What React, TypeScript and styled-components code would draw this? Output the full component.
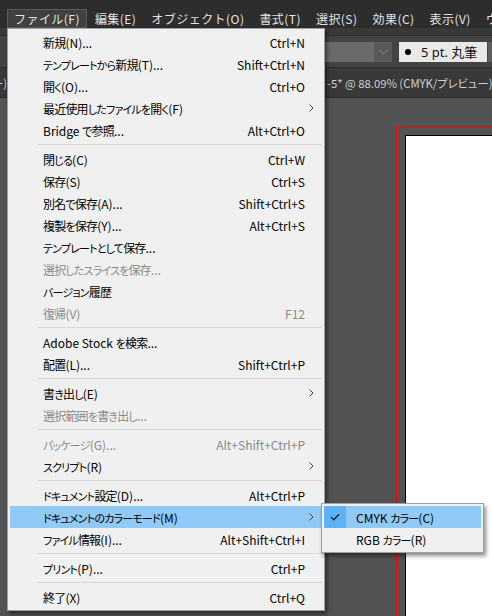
import React from "react";
import styled, { createGlobalStyle } from "styled-components";

const Global = createGlobalStyle`
  html, body { margin: 0; padding: 0; height: 100%; overflow: hidden; background: #535353; }
  #root { height: 100%; }
`;

const Window = styled.div`
  height: 100%;
  display: flex;
  flex-direction: column;
  font-family: "Noto Sans CJK JP", sans-serif;
`;

const MenuBar = styled.div`
  height: 28px;
  box-sizing: border-box;
  padding: 9px 0 0 7px;
  background: #2d2d2d;
  display: flex;
  align-items: stretch;
  position: relative;
  z-index: 5;
`;

const MenuTitle = styled.div<{ $active?: boolean }>`
  position: relative;
  flex: none;
  padding: 0 6px;
  margin-right: 1px;
  display: flex;
  align-items: center;
  font-size: 12px;
  letter-spacing: 0.45px;
  color: #e4e4e4;
  white-space: nowrap;
  border: 1px solid ${(p) => (p.$active ? "#5a5a5a" : "transparent")};
  background: ${(p) => (p.$active ? "#404040" : "transparent")};
`;

const Dropdown = styled.div`
  position: absolute;
  top: calc(100% + 1px);
  left: -1px;
  width: 318px;
  box-sizing: border-box;
  background: #f0f0f0;
  border: 1px solid #a0a0a0;
  box-shadow: 2px 3px 4px rgba(0, 0, 0, 0.5);
  padding: 2px;
  font-feature-settings: "palt";
  letter-spacing: 0;
  color: #000;
`;

const Item = styled.div<{ $disabled?: boolean; $hl?: boolean }>`
  position: relative;
  height: 22px;
  display: flex;
  align-items: center;
  padding: 0 8px 0 33px;
  font-size: 12px;
  white-space: nowrap;
  color: ${(p) => (p.$disabled ? "#8a8a8a" : "#000")};
  background: ${(p) => (p.$hl ? "#91c9f7" : "transparent")};
`;

const Label = styled.span`
  flex: 1;
`;

const Kana = styled.span`
  font-size: 11px;
  letter-spacing: -0.8px;
`;

const Kanji = styled.span`
  letter-spacing: -0.8px;
`;

const Shortcut = styled.span`
  margin-right: 9px;
`;

const Sep = styled.div`
  height: 1px;
  background: #d7d7d7;
  margin: 3px 0 3px 28px;
`;

const SubMenu = styled.div`
  position: absolute;
  top: -3px;
  left: calc(100% - 1px);
  width: 163px;
  box-sizing: border-box;
  background: #f0f0f0;
  border: 1px solid #a0a0a0;
  box-shadow: 2px 3px 4px rgba(0, 0, 0, 0.45);
  padding: 2px;
`;

const SubItem = styled.div<{ $hl?: boolean }>`
  height: 22px;
  display: flex;
  align-items: center;
  font-size: 12px;
  color: #000;
  white-space: nowrap;
  background: ${(p) => (p.$hl ? "#91c9f7" : "transparent")};
`;

const CheckCell = styled.div<{ $on?: boolean }>`
  width: 22px;
  height: 22px;
  flex: none;
  display: flex;
  align-items: center;
  justify-content: center;
  background: ${(p) => (p.$on ? "#5eb2f6" : "transparent")};
`;

const SubLabel = styled.span`
  padding-left: 10px;
`;

const Strip = styled.div`
  height: 7px;
  background: #393939;
`;

const Toolbar = styled.div`
  height: 32px;
  box-sizing: border-box;
  background: #434343;
  border-top: 1px solid #2f2f2f;
  display: flex;
  align-items: center;
  padding-left: 250px;
  overflow: hidden;
`;

const GrayField = styled.div`
  width: 124px;
  height: 20px;
  flex: none;
  background: #6b6b6b;
`;

const ChevronBtn = styled.div<{ $light?: boolean }>`
  width: 18px;
  height: 20px;
  flex: none;
  background: ${(p) => (p.$light ? "#5e5e5e" : "#595959")};
  display: flex;
  align-items: center;
  justify-content: center;
`;

const StrokeField = styled.div`
  width: 88px;
  height: 20px;
  flex: none;
  margin-left: 7px;
  margin-right: 1px;
  background: #e8e8e8;
  display: flex;
  align-items: center;
  padding-left: 6px;
  box-sizing: border-box;
  font-family: "Noto Sans", "Noto Sans CJK JP", sans-serif;
  font-size: 13px;
  color: #111;
  white-space: nowrap;
  gap: 10px;
`;

const Dot = styled.span`
  width: 6px;
  height: 6px;
  border-radius: 50%;
  background: #000;
  flex: none;
`;

const TabBar = styled.div`
  height: 31px;
  box-sizing: border-box;
  background: #393939;
  border-top: 1px solid #2e2e2e;
  border-bottom: 1px solid #2a2a2a;
  display: flex;
  align-items: stretch;
  overflow: hidden;
`;

const Tab = styled.div<{ $clip?: boolean }>`
  flex: none;
  display: flex;
  align-items: center;
  justify-content: ${(p) => (p.$clip ? "flex-end" : "flex-start")};
  width: ${(p) => (p.$clip ? "7px" : "auto")};
  overflow: hidden;
  padding-left: ${(p) => (p.$clip ? "0" : "319px")};
  border-right: 1px solid #2a2a2a;
  font-size: 11.3px;
  font-feature-settings: "palt";
  color: #cfcfcf;
  white-space: nowrap;
`;

const Canvas = styled.div`
  flex: 1;
  background: #535353;
  display: flex;
  flex-direction: column;
  padding: 28px 0 0 396px;
  overflow: hidden;
`;

const Bleed = styled.div`
  flex: 1;
  display: flex;
  flex-direction: column;
  border-top: 1px solid #ff0000;
  border-left: 1px solid #ff0000;
  padding: 8px 0 0 8px;
`;

const Artboard = styled.div`
  flex: 1;
  background: #ffffff;
  border-top: 1px solid #000;
  border-left: 1px solid #000;
`;

type Entry =
  | { label: string; sc?: string; dis?: boolean; sub?: boolean; hl?: boolean }
  | "sep";

const fileMenu: Entry[] = [
  { label: "新規(N)...", sc: "Ctrl+N" },
  { label: "テンプレートから新規(T)...", sc: "Shift+Ctrl+N" },
  { label: "開く(O)...", sc: "Ctrl+O" },
  { label: "最近使用したファイルを開く(F)", sub: true },
  { label: "Bridge で参照...", sc: "Alt+Ctrl+O" },
  "sep",
  { label: "閉じる(C)", sc: "Ctrl+W" },
  { label: "保存(S)", sc: "Ctrl+S" },
  { label: "別名で保存(A)...", sc: "Shift+Ctrl+S" },
  { label: "複製を保存(Y)...", sc: "Alt+Ctrl+S" },
  { label: "テンプレートとして保存..." },
  { label: "選択したスライスを保存...", dis: true },
  { label: "バージョン履歴" },
  { label: "復帰(V)", sc: "F12", dis: true },
  "sep",
  { label: "Adobe Stock を検索..." },
  { label: "配置(L)...", sc: "Shift+Ctrl+P" },
  "sep",
  { label: "書き出し(E)", sub: true },
  { label: "選択範囲を書き出し...", dis: true },
  "sep",
  { label: "パッケージ(G)...", sc: "Alt+Shift+Ctrl+P", dis: true },
  { label: "スクリプト(R)", sub: true },
  "sep",
  { label: "ドキュメント設定(D)...", sc: "Alt+Ctrl+P" },
  { label: "ドキュメントのカラーモード(M)", sub: true, hl: true },
  { label: "ファイル情報(I)...", sc: "Alt+Shift+Ctrl+I" },
  "sep",
  { label: "プリント(P)...", sc: "Ctrl+P" },
  "sep",
  { label: "終了(X)", sc: "Ctrl+Q" },
];

const titles = ["編集(E)", "オブジェクト(O)", "書式(T)", "選択(S)", "効果(C)", "表示(V)", "ウィンドウ(W)", "ヘルプ(H)"];

const KANA = /[\u3040-\u30ff]/;
const KANJI = /[\u3400-\u9fff]/;

function jp(text: string) {
  return text
    .split(/([\u3040-\u30ff]+|[\u3400-\u9fff]+)/)
    .filter(Boolean)
    .map((part, i) =>
      KANA.test(part) ? (
        <Kana key={i}>{part}</Kana>
      ) : KANJI.test(part) ? (
        <Kanji key={i}>{part}</Kanji>
      ) : (
        <React.Fragment key={i}>{part}</React.Fragment>
      )
    );
}

const SubArrow = () => (
  <svg width="5" height="8" viewBox="0 0 5 8" style={{ flex: "none" }}>
    <polyline points="0.5,0.5 4,4 0.5,7.5" fill="none" stroke="#444" strokeWidth="1" />
  </svg>
);

const Check = () => (
  <svg width="10" height="8" viewBox="0 0 10 8">
    <polyline points="1,4 3.8,6.8 9,1.2" fill="none" stroke="#222" strokeWidth="1.3" />
  </svg>
);

const Chevron = ({ color }: { color: string }) => (
  <svg width="9" height="6" viewBox="0 0 9 6">
    <polyline points="0.5,0.8 4.5,4.8 8.5,0.8" fill="none" stroke={color} strokeWidth="1" />
  </svg>
);

export default function App() {
  return (
    <>
      <Global />
      <Window>
        <MenuBar>
          <MenuTitle $active>
            ファイル(F)
            <Dropdown>
              {fileMenu.map((e, i) =>
                e === "sep" ? (
                  <Sep key={i} />
                ) : (
                  <Item key={i} $disabled={e.dis} $hl={e.hl}>
                    <Label>{jp(e.label)}</Label>
                    {e.sc && <Shortcut>{e.sc}</Shortcut>}
                    {e.sub && <SubArrow />}
                    {e.hl && (
                      <SubMenu>
                        <SubItem $hl>
                          <CheckCell $on>
                            <Check />
                          </CheckCell>
                          <SubLabel>{jp("CMYK カラー(C)")}</SubLabel>
                        </SubItem>
                        <SubItem>
                          <CheckCell />
                          <SubLabel>{jp("RGB カラー(R)")}</SubLabel>
                        </SubItem>
                      </SubMenu>
                    )}
                  </Item>
                )
              )}
            </Dropdown>
          </MenuTitle>
          {titles.map((t) => (
            <MenuTitle key={t}>{t}</MenuTitle>
          ))}
        </MenuBar>
        <Strip />
        <Toolbar>
          <GrayField />
          <ChevronBtn>
            <Chevron color="#8c8c8c" />
          </ChevronBtn>
          <StrokeField>
            <Dot />
            <span>5 pt. 丸筆</span>
          </StrokeField>
          <ChevronBtn $light>
            <Chevron color="#e0e0e0" />
          </ChevronBtn>
        </Toolbar>
        <TabBar>
          <Tab $clip>ビュー)</Tab>
          <Tab>-5* @ 88.09% (CMYK/プレビュー)</Tab>
        </TabBar>
        <Canvas>
          <Bleed>
            <Artboard />
          </Bleed>
        </Canvas>
      </Window>
    </>
  );
}
